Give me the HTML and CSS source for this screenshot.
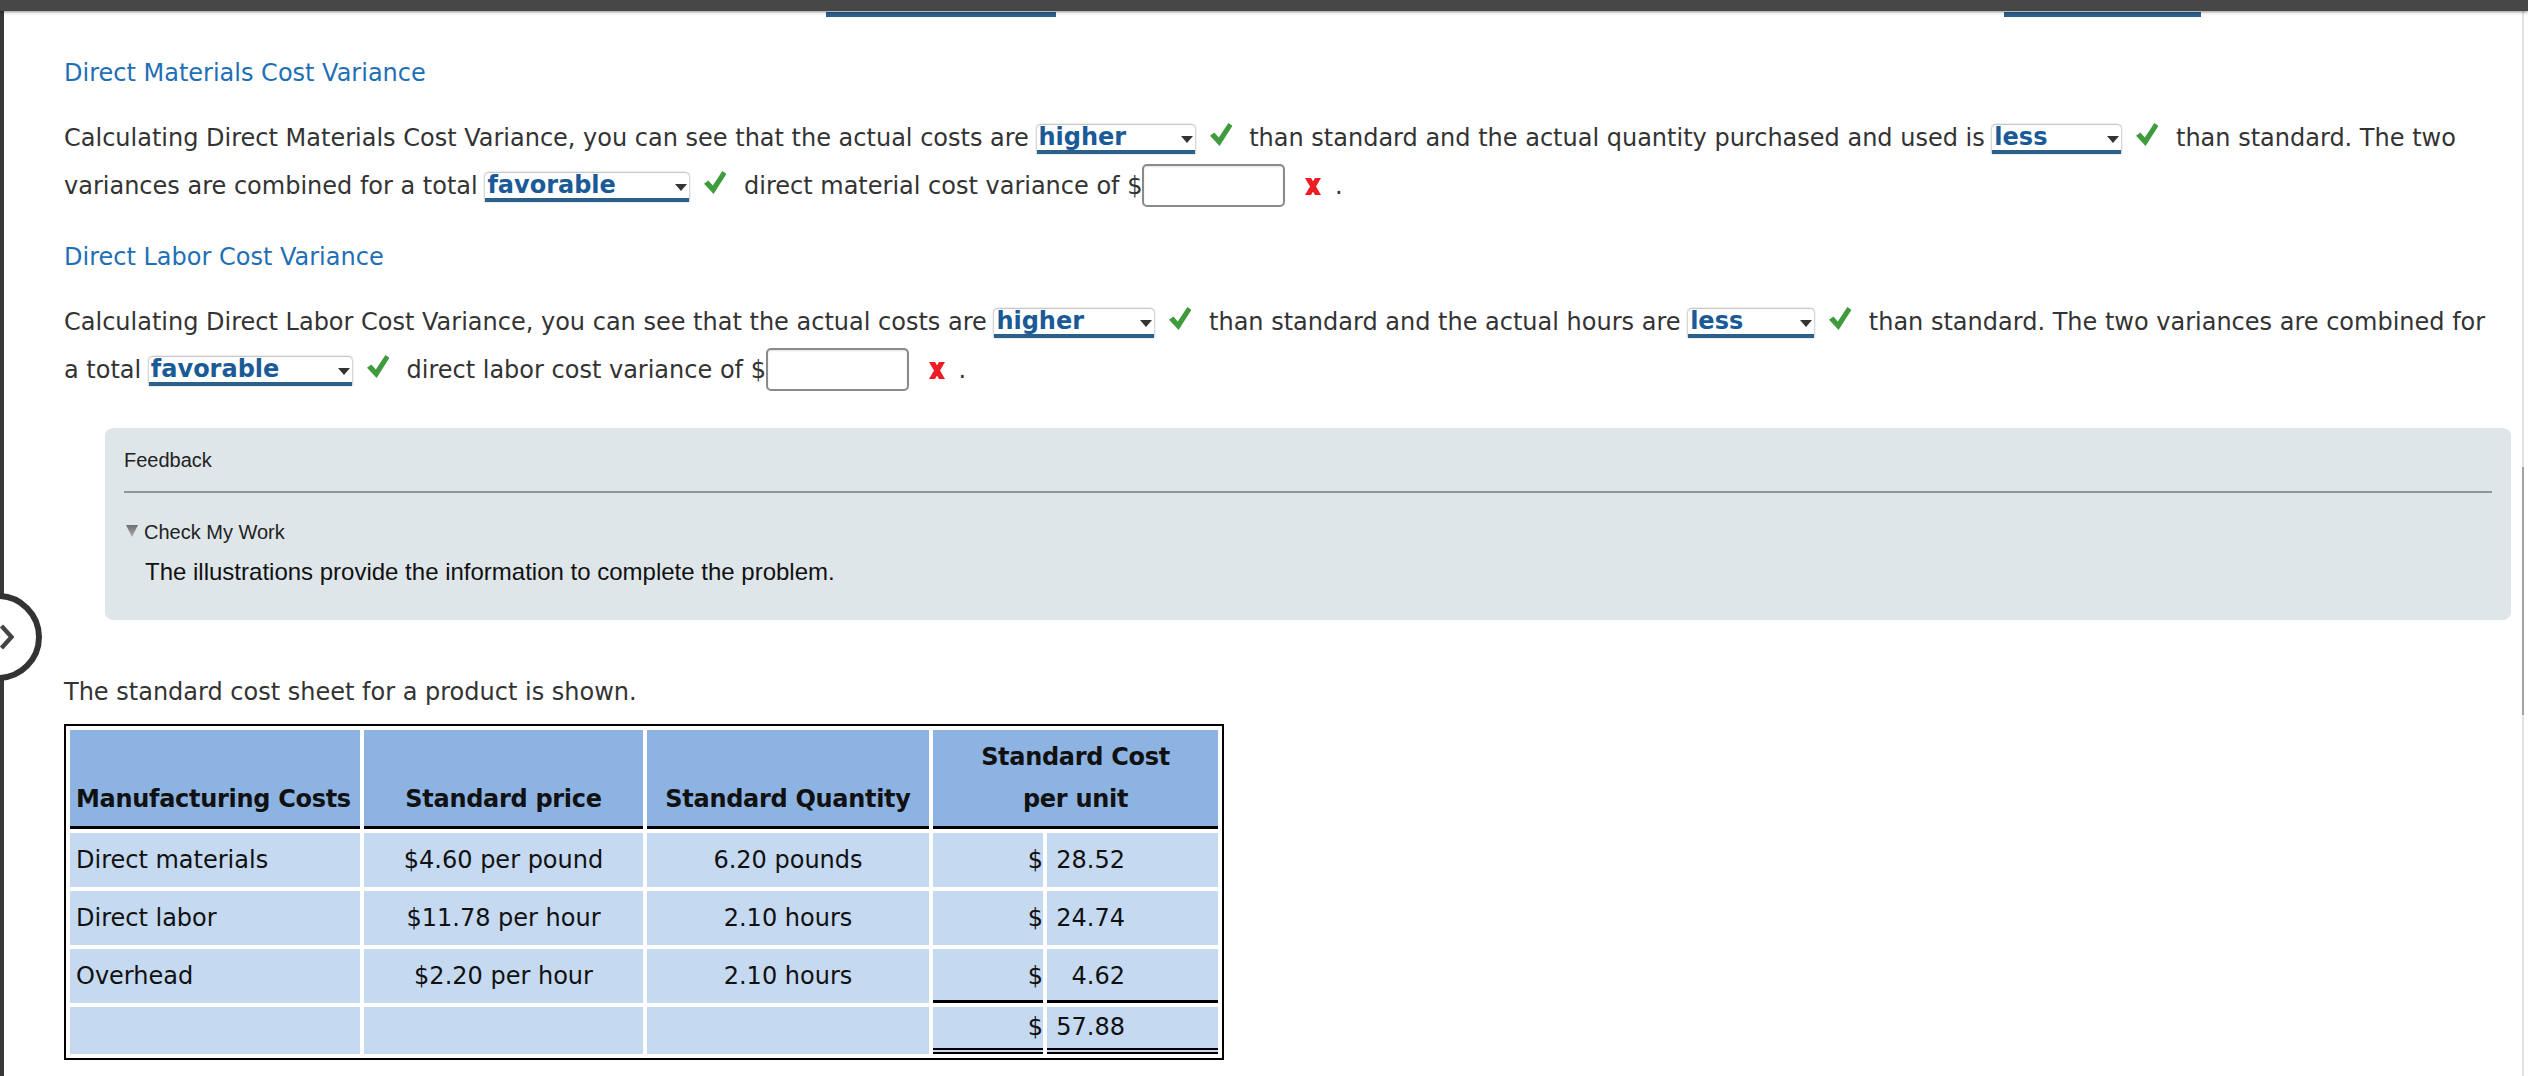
FILE: index.html
```html
<!DOCTYPE html>
<html lang="en">
<head>
<meta charset="utf-8">
<title>Cost Variance</title>
<link rel="stylesheet" href="styles.css">
</head>
<body>
<div class="topbar"></div>
<div class="frame">
  <div class="peek-row"><span class="peek peek-a"></span><span class="peek peek-b"></span></div>

  <h2 class="sec-title">Direct Materials Cost Variance</h2>
  <p class="q"><span class="seg">Calculating Direct Materials Cost Variance, you can see that the actual costs are </span><span class="sel w-higher">higher<i class="caret"></i></span><svg class="ok" viewBox="0 0 22 23"><path d="M0 12.8 L4.4 9.4 L8.8 14.6 L18.4 0 L22.4 2.8 L9.6 23 Z" fill="#3f9b3b"/></svg><span class="seg"> than standard and the actual quantity purchased and used is </span><span class="sel w-less">less<i class="caret"></i></span><svg class="ok" viewBox="0 0 22 23"><path d="M0 12.8 L4.4 9.4 L8.8 14.6 L18.4 0 L22.4 2.8 L9.6 23 Z" fill="#3f9b3b"/></svg><span class="seg"> than standard. The two</span> <span class="seg">variances are combined for a total </span><span class="sel w-fav">favorable<i class="caret"></i></span><svg class="ok" viewBox="0 0 22 23"><path d="M0 12.8 L4.4 9.4 L8.8 14.6 L18.4 0 L22.4 2.8 L9.6 23 Z" fill="#3f9b3b"/></svg><span class="seg"> direct material cost variance of $</span><span class="inp"></span><svg class="bad" viewBox="0 0 16 17"><path d="M0 0 H6 L16 17 H10 Z M10 0 H16 L6 17 H0 Z" fill="#ee1c24"/></svg><span class="seg"> .</span></p>

  <h2 class="sec-title second">Direct Labor Cost Variance</h2>
  <p class="q"><span class="seg">Calculating Direct Labor Cost Variance, you can see that the actual costs are </span><span class="sel w-higher2">higher<i class="caret"></i></span><svg class="ok" viewBox="0 0 22 23"><path d="M0 12.8 L4.4 9.4 L8.8 14.6 L18.4 0 L22.4 2.8 L9.6 23 Z" fill="#3f9b3b"/></svg><span class="seg"> than standard and the actual hours are </span><span class="sel w-less2">less<i class="caret"></i></span><svg class="ok" viewBox="0 0 22 23"><path d="M0 12.8 L4.4 9.4 L8.8 14.6 L18.4 0 L22.4 2.8 L9.6 23 Z" fill="#3f9b3b"/></svg><span class="seg"> than standard. The two variances are combined for</span> <span class="seg">a total </span><span class="sel w-fav2">favorable<i class="caret"></i></span><svg class="ok" viewBox="0 0 22 23"><path d="M0 12.8 L4.4 9.4 L8.8 14.6 L18.4 0 L22.4 2.8 L9.6 23 Z" fill="#3f9b3b"/></svg><span class="seg"> direct labor cost variance of $</span><span class="inp"></span><svg class="bad" viewBox="0 0 16 17"><path d="M0 0 H6 L16 17 H10 Z M10 0 H16 L6 17 H0 Z" fill="#ee1c24"/></svg><span class="seg"> .</span></p>

  <div class="feedback">
    <div class="fb-title">Feedback</div>
    <div class="fb-rule"></div>
    <div class="fb-toggle"><svg class="tri" viewBox="0 0 12 12"><defs><linearGradient id="tg" x1="0" y1="0" x2="0" y2="1"><stop offset="0" stop-color="#6f6f6f"/><stop offset="1" stop-color="#a9a9a9"/></linearGradient></defs><path d="M0 0 H12 L6 12 Z" fill="url(#tg)"/></svg>Check My Work</div>
    <div class="fb-body">The illustrations provide the information to complete the problem.</div>
  </div>

  <p class="intro">The standard cost sheet for a product is shown.</p>

  <table class="cost">
    <colgroup>
      <col class="c1"><col class="c2"><col class="c3"><col class="c4a"><col class="c4b">
    </colgroup>
    <thead>
      <tr>
        <th class="l">Manufacturing Costs</th>
        <th>Standard price</th>
        <th>Standard Quantity</th>
        <th colspan="2">Standard Cost<br>per unit</th>
      </tr>
    </thead>
    <tbody>
      <tr>
        <td class="l">Direct materials</td>
        <td>$4.60 per pound</td>
        <td>6.20 pounds</td>
        <td class="dol">$</td>
        <td class="amt">28.52</td>
      </tr>
      <tr>
        <td class="l">Direct labor</td>
        <td>$11.78 per hour</td>
        <td>2.10 hours</td>
        <td class="dol">$</td>
        <td class="amt">24.74</td>
      </tr>
      <tr class="sub">
        <td class="l">Overhead</td>
        <td>$2.20 per hour</td>
        <td>2.10 hours</td>
        <td class="dol">$</td>
        <td class="amt">4.62</td>
      </tr>
      <tr class="total">
        <td class="l"></td>
        <td></td>
        <td></td>
        <td class="dol">$</td>
        <td class="amt">57.88</td>
      </tr>
    </tbody>
  </table>
</div>

<div class="toggle"><svg class="chev" viewBox="0 0 14 26"><polyline points="1.5,2 11.5,13 1.5,24" fill="none" stroke="#454545" stroke-width="4.4"/></svg></div>
<div class="scroll-track"><div class="scroll-thumb"></div></div>
</body>
</html>
```

FILE: styles.css
```css
* { box-sizing: border-box; }

html, body {
  margin: 0;
  padding: 0;
  background: #fff;
}

body {
  position: relative;
  height: 1076px;
  overflow: hidden;
  font-family: "DejaVu Sans", Verdana, sans-serif;
  font-size: 24px;
  color: #333;
}

.topbar {
  position: relative;
  z-index: 2;
  height: 11px;
  background: #474747;
  box-shadow: 0 1px 3px rgba(0, 0, 0, 0.45);
}

.frame {
  min-height: 1065px;
  border-left: 4px solid #383838;
  padding: 0 17px 0 60px;
}

.peek-row {
  display: flex;
  height: 8px;
  padding-top: 1px;
}

.peek {
  height: 5px;
  background: #2b5f8c;
}

.peek-a { margin-left: 762px; width: 230px; }
.peek-b { margin-left: 948px; width: 197px; }

.sec-title {
  margin: 30px 0 17px;
  font-size: 24px;
  font-weight: normal;
  line-height: 48px;
  color: #1f6fb5;
}

.sec-title.second { margin-top: 23px; }

.q {
  margin: 0;
  padding-right: 10px;
  line-height: 48px;
}

.sel {
  display: inline-flex;
  align-items: flex-start;
  vertical-align: 1px;
  height: 29px;
  line-height: 25px;
  padding-left: 2px;
  background: #fff;
  border-bottom: 4px solid #2b5f8c;
  border-radius: 4px 4px 0 0;
  box-shadow: 0 -1px 2px rgba(0, 0, 0, 0.22), 1px 0 2px rgba(0, 0, 0, 0.14), -1px 0 2px rgba(0, 0, 0, 0.14);
  font-weight: bold;
  color: #1a5a97;
}

.caret {
  margin: 11px 2px 0 auto;
  width: 0;
  height: 0;
  border-left: 6px solid transparent;
  border-right: 6px solid transparent;
  border-top: 7px solid #333;
}

.w-higher { width: 158px; }
.w-less { width: 129px; }
.w-fav { width: 204px; }
.w-higher2 { width: 160px; }
.w-less2 { width: 126px; }
.w-fav2 { width: 203px; }

.ok {
  width: 22px;
  height: 23px;
  margin: 0 10px 0 15px;
}

.inp {
  display: inline-block;
  width: 143px;
  height: 43px;
  vertical-align: -13px;
  background: #fff;
  border: 2px solid #8a8a8a;
  border-radius: 5px;
  box-shadow: inset 0 1px 2px rgba(0, 0, 0, 0.12);
}

.bad {
  width: 16px;
  height: 17px;
  margin: 0 6px 0 20px;
  vertical-align: -1px;
}

.feedback {
  margin: 34px 0 0 41px;
  padding: 20px 19px 34px;
  background: #dfe6ea;
  border-radius: 8px;
  font-family: "Liberation Sans", Arial, sans-serif;
  color: #222;
}

.fb-title {
  font-size: 20px;
  line-height: 24px;
}

.fb-rule {
  margin-top: 19px;
  height: 2px;
  background: #8e969a;
}

.fb-toggle {
  margin-top: 27px;
  font-size: 20px;
  line-height: 24px;
}

.tri {
  width: 12px;
  height: 12px;
  margin: 0 6px 0 2px;
  vertical-align: 2px;
}

.fb-body {
  margin-top: 14px;
  padding-left: 21px;
  font-size: 24px;
  line-height: 28px;
  color: #111;
}

.intro {
  margin: 48px 0 8px;
  line-height: 48px;
}

.cost {
  width: 1160px;
  table-layout: fixed;
  border: 2px solid #000;
  border-spacing: 4px;
  color: #111;
  font-size: 24px;
}

.c1 { width: 290px; }
.c2 { width: 279px; }
.c3 { width: 282px; }
.c4a { width: 110px; }
.c4b { width: 171px; }

.cost th {
  padding: 6px;
  background: #8db3e2;
  border-bottom: 3px solid #000;
  font-weight: bold;
  line-height: 42px;
  letter-spacing: -0.3px;
  text-align: center;
  vertical-align: bottom;
  white-space: nowrap;
}

.cost td {
  padding: 6px;
  background: #c5d9f1;
  line-height: 42px;
  text-align: center;
  vertical-align: middle;
  white-space: nowrap;
}

.cost .l { text-align: left; }

.cost td.dol {
  padding-right: 0;
  text-align: right;
}

.cost td.amt {
  padding-right: 93px;
  text-align: right;
}

.cost tr.sub td.dol,
.cost tr.sub td.amt {
  padding-bottom: 3px;
  border-bottom: 3px solid #000;
}

.cost tr.total td {
  padding-top: 0;
  padding-bottom: 0;
  line-height: 41px;
}

.cost tr.total td.dol,
.cost tr.total td.amt {
  border-bottom: 6px double #000;
}

.toggle {
  position: absolute;
  z-index: 3;
  left: -46px;
  top: 593px;
  width: 88px;
  height: 88px;
  display: flex;
  align-items: center;
  justify-content: flex-end;
  padding-right: 22px;
  background: #fff;
  border: 6px solid #333;
  border-radius: 50%;
}

.chev {
  width: 14px;
  height: 26px;
  flex: none;
}

.scroll-track {
  position: absolute;
  top: 11px;
  right: 4px;
  bottom: 0;
  width: 2px;
  background: #e2e2e2;
}

.scroll-thumb {
  margin-top: 456px;
  height: 248px;
  background: #a2a2a2;
}
```
